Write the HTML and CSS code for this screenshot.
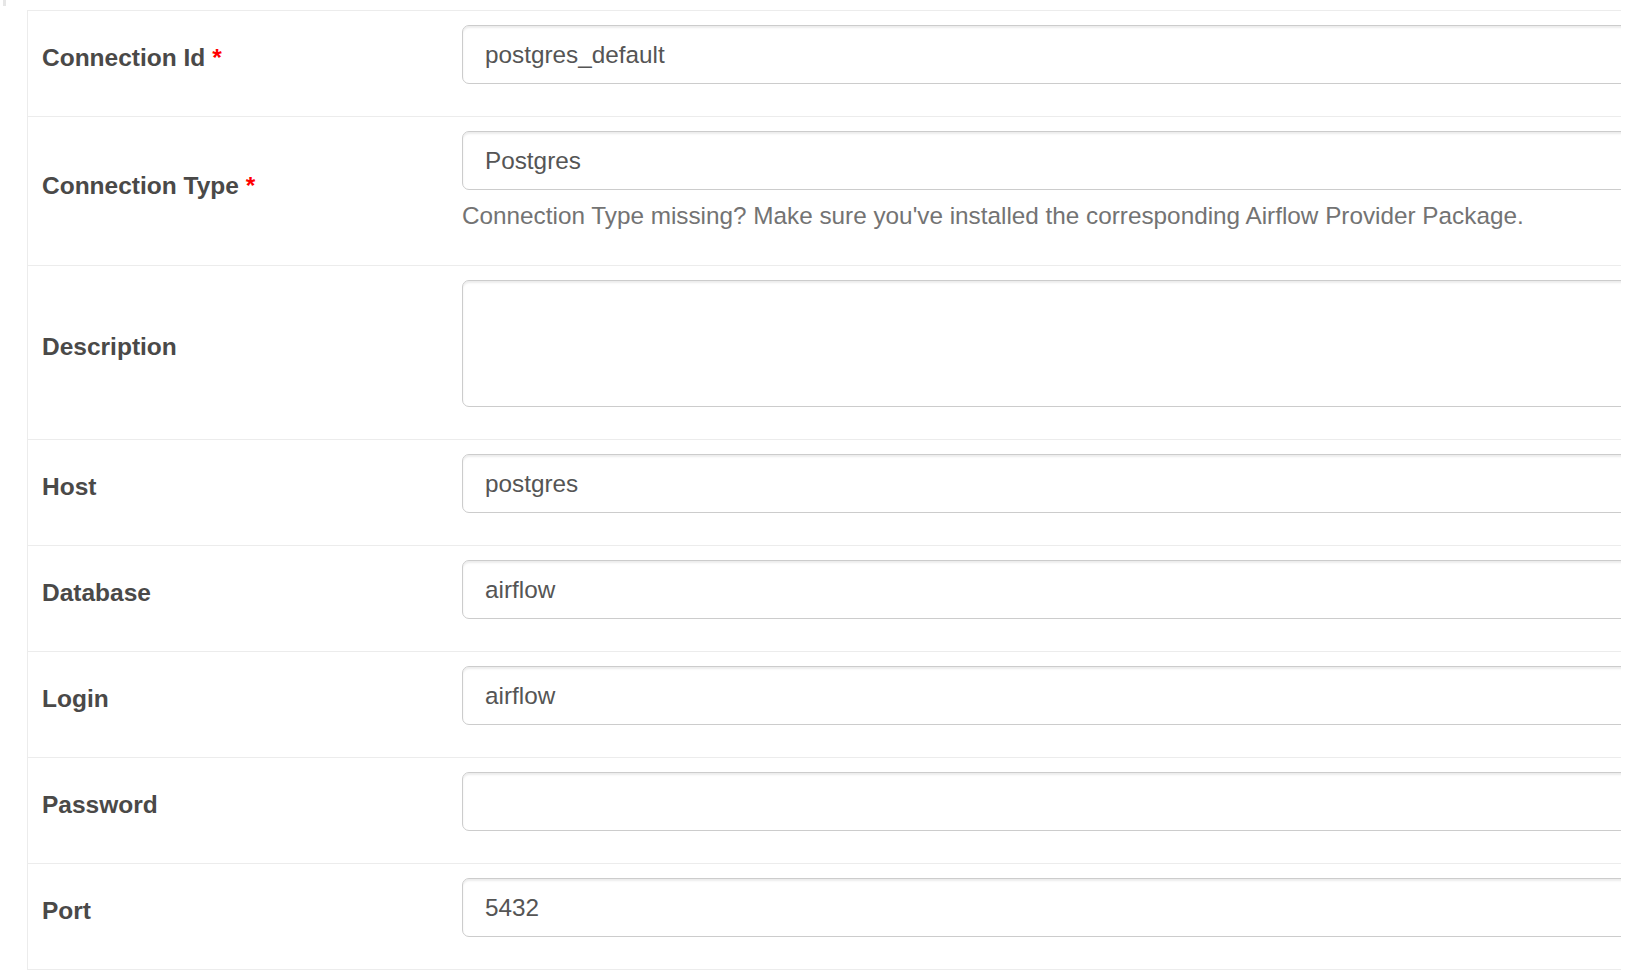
FILE: index.html
```html
<!DOCTYPE html>
<html lang="en">
<head>
<meta charset="utf-8">
<title>Edit Connection</title>
<link rel="stylesheet" href="styles.css">
</head>
<body>
<div class="viewport">
  <div class="top-mark"></div>
  <form class="conn-form">
    <div class="row">
      <div class="label-cell"><label>Connection Id <span class="req">*</span></label></div>
      <div class="field-cell"><div class="input">postgres_default</div></div>
    </div>
    <div class="row">
      <div class="label-cell"><label>Connection Type <span class="req">*</span></label></div>
      <div class="field-cell">
        <div class="input">Postgres</div>
        <p class="help">Connection Type missing? Make sure you've installed the corresponding Airflow Provider Package.</p>
      </div>
    </div>
    <div class="row">
      <div class="label-cell"><label>Description</label></div>
      <div class="field-cell"><div class="input textarea"></div></div>
    </div>
    <div class="row">
      <div class="label-cell"><label>Host</label></div>
      <div class="field-cell"><div class="input">postgres</div></div>
    </div>
    <div class="row">
      <div class="label-cell"><label>Database</label></div>
      <div class="field-cell"><div class="input">airflow</div></div>
    </div>
    <div class="row">
      <div class="label-cell"><label>Login</label></div>
      <div class="field-cell"><div class="input">airflow</div></div>
    </div>
    <div class="row">
      <div class="label-cell"><label>Password</label></div>
      <div class="field-cell"><div class="input"></div></div>
    </div>
    <div class="row last">
      <div class="label-cell"><label>Port</label></div>
      <div class="field-cell"><div class="input">5432</div></div>
    </div>
  </form>
</div>
</body>
</html>
```

FILE: styles.css
```css
html, body {
  margin: 0;
  padding: 0;
  background: #ffffff;
  overflow: hidden;
  height: 970px;
}

body {
  font-family: "Liberation Sans", Arial, sans-serif;
  font-size: 24px;
  color: #4a4948;
}

.viewport {
  width: 1621px;
  overflow: hidden;
}

.top-mark {
  width: 3px;
  height: 6px;
  margin-left: 3px;
  background: #e6e6e6;
}

.conn-form {
  margin: 4px 0 0 27px;
  width: 1700px;
  border-left: 1px solid #ececec;
}

.row {
  display: grid;
  grid-template-columns: 419px 1fr;
  border-top: 1px solid #ececec;
}

.row.last {
  border-bottom: 1px solid #ececec;
}

.label-cell {
  display: flex;
  align-items: center;
  padding: 14px 14px 25px 14px;
}

.label-cell label {
  font-weight: bold;
  font-size: 24.5px;
  color: #4a4948;
}

.req {
  color: #ff0000;
}

.field-cell {
  padding: 14px 0 32px 15px;
}

.input {
  box-sizing: border-box;
  height: 59px;
  border: 1px solid #cccccc;
  border-radius: 7px;
  box-shadow: inset 0 2px 2px rgba(0, 0, 0, 0.075);
  padding: 0 22px;
  display: flex;
  align-items: center;
  color: #555555;
  font-size: 24.3px;
  background: #ffffff;
}

.input.textarea {
  height: 127px;
}

.help {
  margin: 9px 0 0 0;
  line-height: 34px;
  color: #737373;
  font-size: 24.3px;
}
```
